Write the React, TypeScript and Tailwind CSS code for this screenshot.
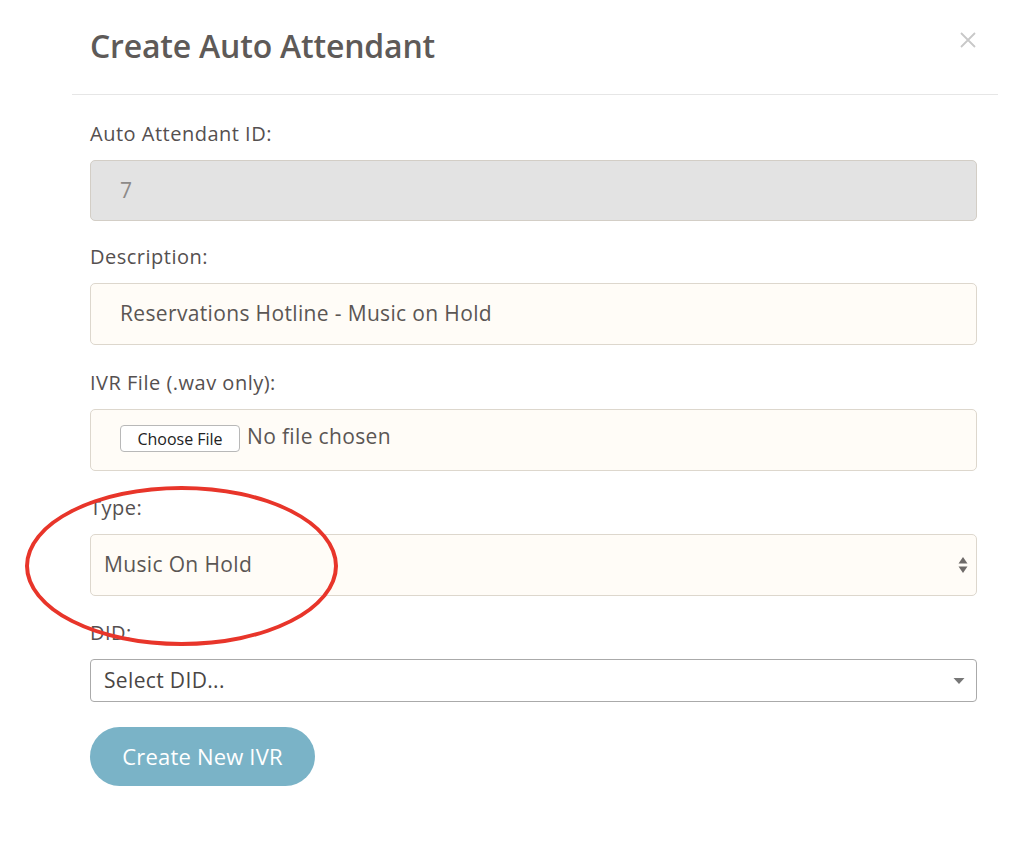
import React from "react";

const font = { fontFamily: '"Open Sans", "Noto Sans", sans-serif' };

function Label({ children }: { children: React.ReactNode }) {
  return <div className="text-[20px] leading-[24px] text-[#555050] mb-[14px] tracking-[0.5px]">{children}</div>;
}

export default function App() {
  return (
    <div className="relative w-[1036px] h-[856px] bg-white overflow-hidden" style={font}>
      <div className="pl-[72px] pr-[38px]">
        {/* Header */}
        <div className="flex items-start justify-between h-[95px] border-b border-[#e6e6e6] pl-[18px] pr-[22px]">
          <h1 className="mt-[26px] text-[32px] leading-[40px] font-semibold tracking-[-0.2px] text-[#5e5a58]">Create Auto Attendant</h1>
          <svg width="16" height="16" viewBox="0 0 16 16" className="mt-[32px] stroke-[#c8c8c8]" strokeWidth="1.8">
            <path d="M1 1 L15 15 M15 1 L1 15" />
          </svg>
        </div>

        {/* Body */}
        <div className="pl-[18px] pr-[21px] pt-[27px]">
          <Label>Auto Attendant ID:</Label>
          <div className="h-[61px] rounded-[5px] border border-[#d3cec6] bg-[#e3e3e3] flex items-center px-[29px] text-[21px] text-[#8d8a88]">
            7
          </div>

          <div className="mt-[24px]">
            <Label>Description:</Label>
            <div className="h-[62px] rounded-[5px] border border-[#ddd7cd] bg-[#fffcf7] flex items-center px-[29px] text-[21px] tracking-[0.35px] text-[#5b5654]">
              Reservations Hotline - Music on Hold
            </div>
          </div>

          <div className="mt-[26px]">
            <Label>IVR File (.wav only):</Label>
            <div className="h-[62px] rounded-[5px] border border-[#ddd7cd] bg-[#fffcf7] flex items-start pt-[12px] pl-[29px] gap-[7px]">
              <button className="mt-[3px] h-[27px] w-[120px] rounded-[4px] border border-[#b8b8b8] bg-white text-[16px] text-[#222] leading-none">
                Choose File
              </button>
              <span className="text-[21px] leading-[28px] tracking-[0.35px] text-[#5b5654]">No file chosen</span>
            </div>
          </div>

          <div className="mt-[25px]">
            <Label>Type:</Label>
            <div className="h-[62px] rounded-[5px] border border-[#ddd7cd] bg-[#fffcf7] flex items-center justify-between pl-[13px] pr-[7px] text-[21px] tracking-[0.35px] text-[#5b5654]">
              <span>Music On Hold</span>
              <svg width="12" height="20" viewBox="0 0 12 20" className="fill-[#6e6a68]">
                <path d="M6 2 L10.5 8.5 H1.5 Z" />
                <path d="M6 18 L10.5 11.5 H1.5 Z" />
              </svg>
            </div>
          </div>

          <div className="mt-[25px]">
            <Label>DID:</Label>
            <div className="h-[43px] rounded-[4px] border border-[#aaaaaa] bg-white flex items-center justify-between pl-[13px] pr-[11px] text-[21px] tracking-[0.35px] text-[#4a4644]">
              <span>Select DID...</span>
              <svg width="12" height="8" viewBox="0 0 12 8" className="fill-[#777]">
                <path d="M0.5 1 H11.5 L6 7 Z" />
              </svg>
            </div>
          </div>

          <button className="mt-[25px] h-[59px] w-[225px] rounded-full bg-[#7ab3c7] text-white text-[22px] tracking-[0.2px]">
            Create New IVR
          </button>
        </div>
      </div>

      {/* Annotation */}
      <div className="absolute left-[25px] top-[486px] w-[313px] h-[160px] rounded-[50%] border-[4px] border-[#e8352a]" />
    </div>
  );
}
